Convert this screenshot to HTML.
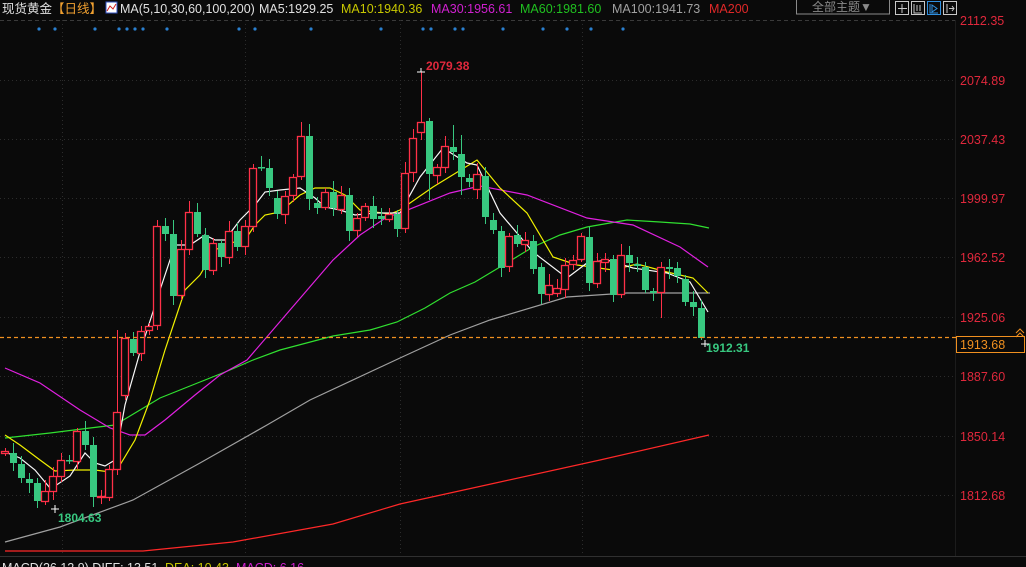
<!DOCTYPE html>
<html><head><meta charset="utf-8"><style>
html,body{margin:0;padding:0;background:#0a0a0a;width:1026px;height:567px;overflow:hidden}
svg{display:block}
text{font-family:"Liberation Sans","Noto Sans CJK SC",sans-serif}
</style></head><body>
<svg id="s" width="1026" height="567" viewBox="0 0 1026 567" xmlns="http://www.w3.org/2000/svg">
<rect width="1026" height="567" fill="#0a0a0a"/>
<g id="grid"></g>
<g id="lines"></g>
<g id="candles"></g>
<text x="2" y="13" font-size="12.5" fill="#e0e0e0">现货黄金</text>
<text x="52" y="13" font-size="12.5" fill="#f0a030">【日线】</text>
<rect x="106" y="2" width="11" height="11" fill="#fff" stroke="#3050c0"/>
<polyline points="107,11 110,6 113,9 116,4" fill="none" stroke="#d02020" stroke-width="1"/>
<text x="120" y="13" font-size="12.5" fill="#e0e0e0">MA(5,10,30,60,100,200)</text>
<text x="259" y="13" font-size="12.5" fill="#e0e0e0">MA5:1929.25</text>
<text x="341" y="13" font-size="12.5" fill="#c8c800">MA10:1940.36</text>
<text x="431" y="13" font-size="12.5" fill="#d020d0">MA30:1956.61</text>
<text x="520" y="13" font-size="12.5" fill="#20c020">MA60:1981.60</text>
<text x="612" y="13" font-size="12.5" fill="#a0a0a0">MA100:1941.73</text>
<text x="709" y="13" font-size="12.5" fill="#e02828">MA200</text>
<rect x="796.5" y="-1" width="93" height="15" fill="none" stroke="#8a8a8a"/>
<text x="812" y="11" font-size="12" fill="#8a8a8a">全部主题▼</text>
<g fill="none" stroke="#c8c8c8">
<rect x="895.5" y="1.5" width="13" height="13"/><path d="M902 4v9M898 8.5h9"/>
<rect x="911.5" y="1.5" width="13" height="13"/><path d="M914 4v9h8M917 5v6M920 5v6"/>
<rect x="927.5" y="1.5" width="13" height="13" stroke="#3090e0"/><path d="M930 4v9h8M932 5l5 3.5-5 3.5z" stroke="#3090e0"/>
<rect x="943.5" y="1.5" width="13" height="13"/><path d="M947 4v9M949 8.5h5M952 6l2 2.5-2 2.5"/>
</g>
<g font-size="12.5" fill="#e0283c" id="axis"></g>
<line x1="0" y1="337.5" x2="956" y2="337.5" stroke="#f09020" stroke-width="1.2" stroke-dasharray="4,3"/>
<rect x="956.5" y="336.5" width="68" height="16" fill="#0a0a0a" stroke="#f09020"/>
<text x="960" y="349" font-size="12.5" fill="#f09020">1913.68</text>
<path d="M1016 333l4-4 4 4M1016 337l4-4 4 4" fill="none" stroke="#f09020"/>
<text x="426" y="70" font-size="12" font-weight="bold" fill="#e0283c">2079.38</text>
<text x="58" y="522" font-size="12" font-weight="bold" fill="#38c880">1804.63</text>
<text x="706" y="352" font-size="12" font-weight="bold" fill="#38c880">1912.31</text>
<path d="M51 509h8M55 505v8M701 344h8M705 340v7M417 72h8M421 72v-4" stroke="#fff"/>
<line x1="0" y1="556.5" x2="1026" y2="556.5" stroke="#303030"/>
<text x="2" y="572" font-size="12.5" fill="#e0e0e0">MACD(26,12,9) DIFF: 13.51</text>
<text x="165" y="572" font-size="12.5" fill="#c8c800">DEA: 10.43</text>
<text x="236" y="572" font-size="12.5" fill="#d020d0">MACD: 6.16</text>
</svg>
<script>
var NS="http://www.w3.org/2000/svg";
function el(p,t,a){var e=document.createElementNS(NS,t);for(var k in a)e.setAttribute(k,a[k]);document.getElementById(p).appendChild(e);return e;}
var ys=[20,80,139,198,257,317,376,436,495],labs=["2112.35","2074.89","2037.43","1999.97","1962.52","1925.06","1887.60","1850.14","1812.68"];
ys.forEach(function(y,i){el("grid","line",{x1:0,x2:955,y1:y+.5,y2:y+.5,stroke:i==0?"#3a3a3a":"#2c2c2c","stroke-dasharray":i==0?"4,3":"1,3"});
var t=el("axis","text",{x:960,y:y+5});t.textContent=labs[i];});
[62,245,400,582].forEach(function(x){el("grid","line",{x1:x+.5,x2:x+.5,y1:20,y2:556,stroke:"#2c2c2c","stroke-dasharray":"1,3"});});
el("grid","line",{x1:955.5,x2:955.5,y1:20,y2:556,stroke:"#1c1c1c"});
[39,55,95,119,127,135,143,167,239,255,311,381,423,431,455,463,503,543,567,591,623].forEach(function(x){el("grid","circle",{cx:x,cy:29,r:1.6,fill:"#2a80d0"});});
var ma={
"#a0a0a0":[[5,542],[60,527],[133,500],[200,463],[267,425],[310,400],[400,358],[450,335],[490,320],[567,297],[627,293],[710,293]],
"#ff2828":[[5,551],[143,551],[233,542],[333,524],[400,504],[500,482],[600,460],[709,435]],
"#30e030":[[5,438],[50,433],[90,428],[115,425],[135,413],[160,398],[200,382],[230,370],[253,360],[280,350],[333,336],[370,330],[397,322],[425,308],[450,293],[475,282],[500,267],[533,247],[560,235],[587,227],[627,220],[660,222],[690,224],[709,228]],
"#e020e0":[[5,368],[40,383],[80,410],[110,428],[130,435],[145,435],[165,420],[195,395],[220,375],[247,360],[290,310],[333,260],[360,235],[387,217],[400,213],[450,193],[480,186],[527,195],[587,218],[633,225],[680,247],[708,267]],
"#f0f000":[[5,435],[20,445],[40,460],[55,471],[75,470],[95,470],[110,472],[120,465],[135,440],[150,400],[165,350],[175,320],[185,290],[200,275],[215,250],[230,243],[245,240],[255,225],[265,215],[280,212],[300,195],[315,188],[330,188],[345,195],[360,210],[375,212],[390,214],[400,210],[433,187],[477,160],[500,188],[527,213],[553,257],[577,265],[613,270],[637,264],[667,272],[693,278],[708,293]],
"#f8f8f8":[[5,452],[20,458],[35,470],[50,488],[55,486],[70,476],[85,453],[95,463],[105,466],[115,460],[125,405],[140,352],[160,290],[175,245],[190,245],[205,235],[215,240],[225,240],[240,220],[255,205],[265,192],[280,190],[300,188],[315,198],[325,207],[340,210],[355,215],[375,213],[390,213],[400,213],[420,177],[443,148],[467,163],[477,165],[500,213],[533,252],[567,278],[587,263],[607,260],[633,268],[667,273],[690,282],[708,312]]};
for(var c in ma)el("lines","polyline",{points:ma[c].map(function(p){return p.join(",")}).join(" "),fill:"none",stroke:c,"stroke-width":1.2});
var cd=[[451,453,1],[453,463,0],[464,478,0],[479,483,0],[483,501,0],[491,501,1],[476,491,1],[460,476,1],[460,461,0],[431,461,1],[431,445,0],[445,497,0],[496,497,1],[469,497,1],[412,469,1],
[338,395,1],[339,353,0],[331,353,1],[326,330,1],[226,325,1],[226,234,0],[234,296,0],[249,295,1],[212,249,1],[212,234,0],[235,270,0],[243,270,1],[243,257,0],[231,257,1],[231,247,0],[226,246,1],[168,226,1],[167,168,0],[168,188,0],[198,214,0],[196,214,1],[177,195,1],[136,176,1],[136,199,0],[203,208,0],[192,207,1],[192,208,0],[195,209,1],[195,231,0],[218,230,1],[206,217,1],[206,219,0],[216,219,0],[214,219,1],[214,229,0],[173,228,1],
[138,172,1],[122,132,1],[121,174,0],[167,175,1],[146,167,1],[147,152,0],[154,177,0],[178,182,0],[174,189,1],[176,217,0],[220,230,0],[231,268,0],[236,266,1],[235,244,0],[240,244,1],[241,269,0],[267,294,0],[285,294,1],[288,293,1],[265,289,1],[260,264,1],[236,259,1],[237,283,0],[261,283,1],[259,262,1],[259,295,0],[255,294,1],[255,263,0],[264,266,0],[267,290,0],[291,293,0],[267,292,1],[267,269,0],[268,276,0],[279,302,0],[302,307,0],[308,338,0]];
var wk={14:[330,475],15:[333,400],19:[220,330],37:[122,180],38:[124,210],52:[72,140],53:[118,200],82:[262,318],4:[478,508],87:[300,340],21:[220,305],22:[240,300],56:[125,160],57:[135,195]};
cd.forEach(function(d,i){var x=Math.round(4.5+8*i),t=d[0],b=d[1],h=(i*7)%9+3,l=(i*5)%8+3;
var w=wk[i]||[t-h,b+l];var col=d[2]?"#ff3048":"#38c880";
el("candles","line",{x1:x+.5,x2:x+.5,y1:w[0],y2:w[1],stroke:col});
if(d[2]){el("candles","rect",{x:x-3.5,y:t+.5,width:7,height:Math.max(b-t,1),fill:"#0a0a0a",stroke:col,"stroke-width":1.3});}
else el("candles","rect",{x:x-3,y:t,width:7,height:Math.max(b-t,1.5),fill:col});});
</script>
</body></html>
